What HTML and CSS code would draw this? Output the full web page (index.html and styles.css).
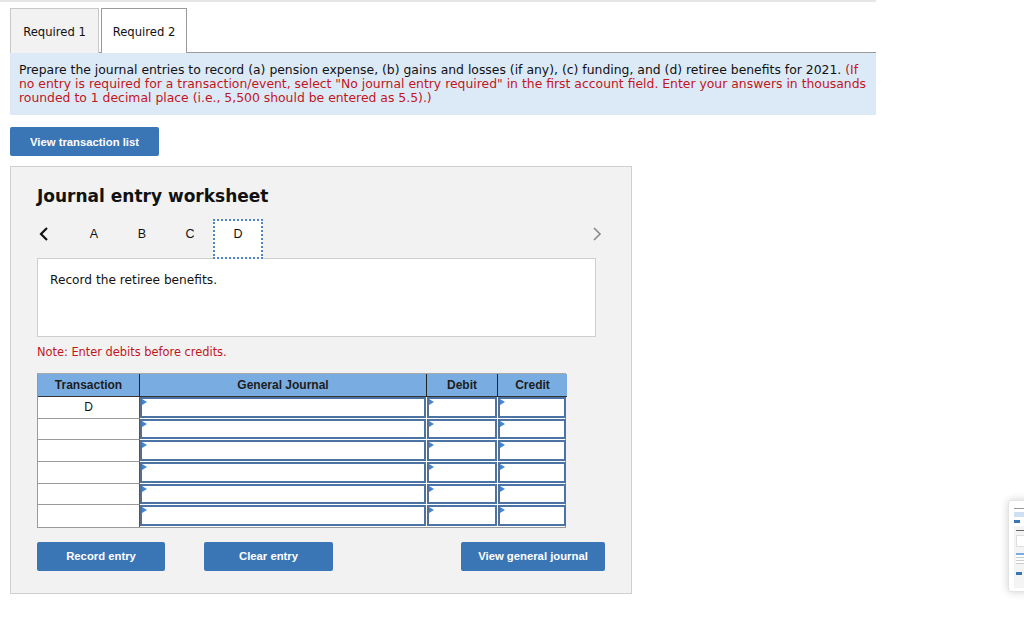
FILE: index.html
```html
<!DOCTYPE html>
<html>
<head>
<meta charset="utf-8">
<link rel="stylesheet" href="styles.css">
</head>
<body>
<div class="topbar"></div>
<div class="page">
  <div class="tabs">
    <div class="tab">Required 1</div>
    <div class="tab active">Required 2</div>
  </div>
  <div class="instr">Prepare the journal entries to record (a) pension expense, (b) gains and losses (if any), (c) funding, and (d) retiree benefits for 2021. <span class="red">(If<br>no entry is required for a transaction/event, select "No journal entry required" in the first account field. Enter your answers in thousands<br>rounded to 1 decimal place (i.e., 5,500 should be entered as 5.5).)</span></div>
  <div class="btn btn-list">View transaction list</div>
  <div class="panel">
    <div class="title">Journal entry worksheet</div>
    <div class="nav">
      <div class="chev">
        <svg width="12" height="16" viewBox="0 0 12 16"><path d="M9 2 L3 8 L9 14" fill="none" stroke="#111" stroke-width="2.2"/></svg>
      </div>
      <div class="letter">A</div>
      <div class="letter">B</div>
      <div class="letter">C</div>
      <div class="letter current">D</div>
      <div class="spacer"></div>
      <div class="chev right">
        <svg width="12" height="16" viewBox="0 0 12 16"><path d="M3 2 L9 8 L3 14" fill="none" stroke="#888" stroke-width="1.6"/></svg>
      </div>
    </div>
    <div class="recordbox">Record the retiree benefits.</div>
    <div class="note">Note: Enter debits before credits.</div>
    <div class="grid">
      <div class="h">Transaction</div>
      <div class="h">General Journal</div>
      <div class="h">Debit</div>
      <div class="h last">Credit</div>

      <div class="t">D</div><div class="in"><i></i></div><div class="in"><i></i></div><div class="in"><i></i></div>
      <div class="t"></div><div class="in"><i></i></div><div class="in"><i></i></div><div class="in"><i></i></div>
      <div class="t"></div><div class="in"><i></i></div><div class="in"><i></i></div><div class="in"><i></i></div>
      <div class="t"></div><div class="in"><i></i></div><div class="in"><i></i></div><div class="in"><i></i></div>
      <div class="t"></div><div class="in"><i></i></div><div class="in"><i></i></div><div class="in"><i></i></div>
      <div class="t"></div><div class="in"><i></i></div><div class="in"><i></i></div><div class="in"><i></i></div>
    </div>
    <div class="actions">
      <div class="btn btn-record">Record entry</div>
      <div class="btn btn-clear">Clear entry</div>
      <div class="btn btn-view">View general journal</div>
    </div>
  </div>
</div>
<div class="thumb">
  <div class="th-line"></div>
  <div class="th-blue"></div>
  <div class="th-btn"></div>
  <div class="th-panel">
    <div class="th-l2"></div>
    <div class="th-box"></div>
    <div class="th-hdr"></div>
    <div class="th-row"></div>
    <div class="th-row"></div>
    <div class="th-row"></div>
    <div class="th-btn2"></div>
  </div>
</div>
</body>
</html>
```

FILE: styles.css
```css
html, body {
  margin: 0;
  padding: 0;
  background: #fff;
}
body {
  font-family: "DejaVu Sans", Verdana, sans-serif;
  font-size: 11px;
  color: #111;
  position: relative;
  width: 1024px;
  height: 624px;
  overflow: hidden;
}
.topbar {
  width: 876px;
  height: 2px;
  background: #e6e6e6;
}
.page {
  margin-left: 10px;
  width: 866px;
}
.tabs {
  display: flex;
  margin-top: 6px;
  border-bottom: 1px solid #9a9a9a;
  height: 44px;
}
.tab {
  box-sizing: border-box;
  height: 45px;
  width: 89px;
  background: #f2f2f2;
  border: 1px solid #c8c8c8;
  border-bottom: none;
  display: flex;
  align-items: center;
  justify-content: center;
  font-size: 11.6px;
  color: #111;
  padding-top: 1px;
}
.tab.active {
  width: 86px;
  margin-left: 2px;
  background: #fff;
  border: 1px solid #9a9a9a;
  border-bottom: none;
  position: relative;
  z-index: 1;
  height: 45px;
}
.instr {
  background: #dceaf8;
  padding: 10px 9px 10px 9px;
  line-height: 14px;
  font-size: 12.4px;
  color: #111;
  white-space: nowrap;
}
.red { color: #c2161b; }
.btn {
  background: #3a75b6;
  color: #fff;
  font-family: "Liberation Sans", Arial, sans-serif;
  font-weight: bold;
  font-size: 11.3px;
  display: flex;
  align-items: center;
  justify-content: center;
  height: 29px;
  border-radius: 2px;
  box-sizing: border-box;
}
.btn-list {
  margin-top: 12px;
  width: 149px;
}
.panel {
  margin-top: 10px;
  width: 622px;
  height: 428px;
  box-sizing: border-box;
  border: 1px solid #cfcfcf;
  background: #f2f2f2;
  padding: 19px 0 0 26px;
}
.title {
  font-weight: bold;
  font-size: 17px;
  line-height: 20px;
  color: #111;
}
.nav {
  margin-top: 13px;
  display: flex;
  height: 40px;
  align-items: flex-start;
  width: 568px;
  margin-bottom: -1px;
  position: relative;
  z-index: 2;
}
.chev {
  width: 32px;
  display: flex;
  align-items: center;
  padding-left: 1px;
  padding-top: 7px;
}
.chev.right {
  width: 14px;
  padding-left: 0;
}
.letter {
  width: 48px;
  height: 40px;
  display: flex;
  justify-content: center;
  box-sizing: border-box;
  padding-top: 8px;
  line-height: 14px;
  font-family: "Liberation Sans", Arial, sans-serif;
  font-size: 12.5px;
  color: #111;
}
.letter.current {
  width: 50px;
  margin-left: -1px;
  padding-top: 6px;
  background: #fff;
  border: 2px dotted #4a86c8;
}
.spacer { flex: 1; }
.recordbox {
  width: 559px;
  height: 79px;
  box-sizing: border-box;
  background: #fff;
  border: 1px solid #cfcfcf;
  padding: 13px 12px;
  line-height: 16px;
  font-size: 12.2px;
}
.note {
  margin-top: 7px;
  line-height: 16px;
  color: #c2161b;
  font-size: 11.4px;
}
.grid {
  margin-top: 13px;
  display: grid;
  grid-template-columns: 102px 287px 71px 69px;
  grid-template-rows: 23px repeat(6, 21.67px);
  width: 529px;
  background: #fff;
  border: 1px solid #9a9a9a;
  border-top: 1px solid #a9a9a9;
  box-sizing: border-box;
}
.h {
  background: #79ade2;
  font-family: "Liberation Sans", Arial, sans-serif;
  font-weight: bold;
  font-size: 12px;
  color: #1d1d1d;
  display: flex;
  align-items: center;
  justify-content: center;
  border-right: 1px solid #222;
  border-bottom: 1px solid #333;
}
.h.last { border-right: none; }
.t {
  border-bottom: 1px solid #9a9a9a;
  border-right: 1px solid #555;
  font-family: "Liberation Sans", Arial, sans-serif;
  font-size: 12px;
  display: flex;
  align-items: center;
  justify-content: center;
  background: #fff;
}
.grid .t:nth-last-child(4) { border-bottom: none; }
.in {
  position: relative;
  background: #fff;
  border: 2px solid #4b73a3;
  border-left: 2px solid #5a6e8a;
  margin: 0 1px 1px 0;
  box-sizing: border-box;
}
.in i {
  position: absolute;
  left: 0;
  top: 0;
  width: 0;
  height: 0;
  border-top: 3px solid transparent;
  border-bottom: 3px solid transparent;
  border-left: 5px solid #3f86d6;
}
.actions {
  display: flex;
  margin-top: 14px;
}
.btn-record { width: 128px; }
.btn-clear { width: 129px; margin-left: 39px; }
.btn-view { width: 144px; margin-left: 128px; }

.thumb {
  position: absolute;
  left: 1008px;
  top: 500px;
  width: 30px;
  height: 92px;
  background: #fff;
  border-radius: 3px;
  box-shadow: 0 0 8px rgba(0,0,0,0.18);
  border: 1px solid #e4e4e4;
  box-sizing: border-box;
  padding: 4px 0 0 5px;
}
.th-line { height: 1px; width: 20px; background: #999; margin-top: 3px; }
.th-blue { height: 5px; width: 25px; background: #cfe0f3; margin-top: 3px; }
.th-btn { height: 3px; width: 6px; background: #3a75b6; margin-top: 3px; }
.th-panel { margin-top: 3px; height: 60px; background: #f4f4f4; padding: 2px 0 0 2px; }
.th-l2 { height: 1px; width: 8px; background: #666; margin-top: 2px; }
.th-box { height: 10px; width: 22px; background: #fff; border: 1px solid #ddd; margin-top: 4px; }
.th-hdr { height: 2px; width: 22px; background: #79ade2; margin-top: 6px; }
.th-row { height: 2px; width: 22px; background: #fff; border-bottom: 1px solid #ccc; }
.th-btn2 { height: 3px; width: 6px; background: #3a75b6; margin-top: 8px; }
```
